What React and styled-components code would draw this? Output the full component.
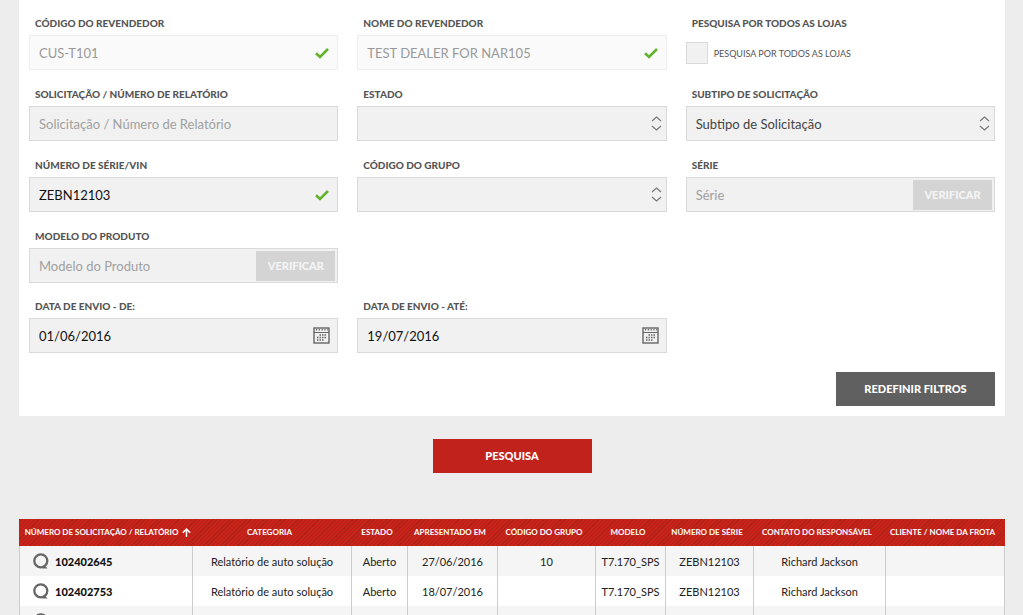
import React from 'react';
import styled, { createGlobalStyle } from 'styled-components';

const GlobalStyle = createGlobalStyle`
  * {
    box-sizing: border-box;
  }
  body {
    margin: 0;
    background: #ededed;
    color: #222;
    font-family: "Gill Sans", Lato, "Open Sans", sans-serif;
  }
  button, input, select {
    font-family: inherit;
  }
`;

const Page = styled.main`
  padding: 0 18px 0 19px;
`;

const Panel = styled.form`
  background: #fff;
  padding: 11px 10px 10px;
`;

const Filters = styled.div`
  display: grid;
  grid-template-columns: repeat(3, 1fr);
  column-gap: 19px;
  row-gap: 11px;
`;

const FieldWrapper = styled.div`
  grid-column-start: ${props => props.$first ? 1 : 'auto'};
`;

const Label = styled.label`
  display: block;
  height: 24px;
  padding: 2px 6px 0;
  line-height: 20px;
  font-size: 10px;
  font-weight: 900;
  color: #555;
  text-transform: uppercase;
  white-space: nowrap;
`;

const Box = styled.div`
  display: flex;
  align-items: center;
  height: 35px;
  border: 1px solid ${props => props.$locked ? '#eee' : '#dadada'};
  background: ${props => props.$locked ? '#fafafa' : '#f1f1f1'};
`;

const TextInput = styled.input`
  flex: 1;
  min-width: 0;
  height: 100%;
  padding: 0 9px;
  border: 0;
  outline: none;
  background: transparent;
  font-size: 13px;
  color: #111;
  &::placeholder {
    color: #a0a0a0;
    opacity: 1;
  }
  &:disabled {
    color: #999;
  }
`;

const CheckIcon = styled.svg`
  width: 14px;
  height: 12px;
  margin-right: 8px;
`;

const VerifyButton = styled.button`
  width: 79px;
  height: 30px;
  margin-right: 2px;
  padding: 0 0 1px;
  border: 0;
  background: #d4d4d4;
  color: #f4f4f4;
  font-size: 11px;
  font-weight: 900;
  text-transform: uppercase;
`;

const CalendarButton = styled.button`
  display: flex;
  margin-right: 7px;
  padding: 0;
  border: 0;
  background: transparent;
  cursor: pointer;
`;

const SelectBox = styled.div`
  position: relative;
  margin-bottom: 1px;
`;

const SelectInput = styled.select`
  display: block;
  width: 100%;
  height: 35px;
  padding: 0 30px 0 9px;
  border: 1px solid #dadada;
  border-radius: 0;
  appearance: none;
  background: #f1f1f1;
  font-size: 13px;
  color: #444;
`;

const SelectArrows = styled.svg`
  position: absolute;
  right: 5px;
  top: 10px;
  width: 11px;
  height: 15px;
  pointer-events: none;
`;

const CheckRow = styled.div`
  display: flex;
  align-items: center;
  gap: 6px;
  height: 36px;
`;

const Checkbox = styled.input.attrs({ type: 'checkbox' })`
  appearance: none;
  width: 22px;
  height: 22px;
  margin: 0;
  border: 1px solid #dadada;
  background: #f1f1f1;
`;

const CheckLabel = styled.label`
  font-size: 9px;
  color: #555;
  text-transform: uppercase;
`;

const Actions = styled.div`
  display: flex;
  justify-content: ${props => props.$align};
  padding-top: ${props => props.$top}px;
`;

const Button = styled.button`
  width: 159px;
  height: 34px;
  padding: 0 0 2px;
  border: 0;
  background: ${props => props.$primary ? '#c2221c' : '#606060'};
  color: #fff;
  font-size: 11px;
  font-weight: 900;
  text-transform: uppercase;
  cursor: pointer;
`;

const Table = styled.table`
  width: 100%;
  margin-top: 46px;
  table-layout: fixed;
  border-collapse: separate;
  border-spacing: 0;
`;

const HeadRow = styled.tr`
  background: repeating-linear-gradient(135deg, #c92219 0 2px, #b02318 2px 3px);
`;

const HeadCell = styled.th`
  width: ${props => props.$width}px;
  height: 27px;
  padding: ${props => props.$sorted ? '0 0 1px 4px' : '0 6px 1px 0'};
  font-size: 8px;
  font-weight: 700;
  color: #fff;
  text-transform: uppercase;
  white-space: nowrap;
  svg {
    width: 9px;
    height: 9px;
    margin-left: 4px;
    vertical-align: -2px;
  }
`;

const Row = styled.tr`
  background: #fff;
  &:nth-child(odd) {
    background: #f5f5f5;
  }
`;

const Cell = styled.td`
  height: 30px;
  padding: 0;
  border-right: 1px solid #ccc;
  font-size: 11px;
  text-align: center;
  white-space: nowrap;
  &:first-child {
    border-left: 1px solid #ccc;
  }
`;

const RequestLink = styled.a`
  display: flex;
  align-items: center;
  gap: 6px;
  padding-left: 13px;
  font-size: 11px;
  font-weight: 900;
  color: #111;
  text-decoration: none;
  svg {
    width: 16px;
    height: 16px;
  }
`;

const Check = () => (
  <CheckIcon viewBox="0 0 14 12" fill="none" stroke="#62b32e" strokeWidth="2.6">
    <path d="M1 6.2 L5 10 L13 2" />
  </CheckIcon>
);

const Calendar = () => (
  <svg width="17" height="17" viewBox="0 0 17 17" fill="none" stroke="#666">
    <rect x="1" y="1" width="15" height="15" strokeWidth="1.4" />
    <path d="M1 5.5 H16" />
    <path d="M3 2.8 H15" strokeWidth="1.6" strokeDasharray="1.2 1.6" />
    <path d="M6.5 8 H14" strokeWidth="1.5" strokeDasharray="1.5 1" />
    <path d="M4 10.5 H14" strokeWidth="1.5" strokeDasharray="1.5 1" />
    <path d="M4 13 H11.5" strokeWidth="1.5" strokeDasharray="1.5 1" />
  </svg>
);

const Ring = () => (
  <svg viewBox="0 0 16 16" fill="none" stroke="#666">
    <circle cx="7.8" cy="7.8" r="6.5" strokeWidth="2.3" />
    <path d="M9.5 15.6 L14.6 15.6 L11.5 12.5" fill="#666" stroke="none" />
  </svg>
);

const SortArrow = () => (
  <svg viewBox="0 0 9 9" fill="none" stroke="#fff" strokeWidth="1.5">
    <path d="M4.5 9 V1.2 M0.8 4.8 L4.5 1.1 L8.2 4.8" />
  </svg>
);

const TextField = ({ id, label, valid, verify, date, first, ...input }) => (
  <FieldWrapper $first={first}>
    <Label htmlFor={id}>{label}</Label>
    <Box $locked={input.disabled}>
      <TextInput id={id} type="text" {...input} />
      {valid && <Check />}
      {verify && <VerifyButton type="button" disabled>Verificar</VerifyButton>}
      {date && (
        <CalendarButton type="button" aria-label="Abrir calendário">
          <Calendar />
        </CalendarButton>
      )}
    </Box>
  </FieldWrapper>
);

const SelectField = ({ id, label, placeholder }) => (
  <FieldWrapper>
    <Label htmlFor={id}>{label}</Label>
    <SelectBox>
      <SelectInput id={id}>
        <option value="">{placeholder}</option>
      </SelectInput>
      <SelectArrows viewBox="0 0 11 15" fill="none" stroke="#777" strokeWidth="1.2">
        <path d="M1 5 L5.5 1 L10 5 M1 10 L5.5 14 L10 10" />
      </SelectArrows>
    </SelectBox>
  </FieldWrapper>
);

const columns = [
  { title: 'Número de Solicitação / Relatório', width: 174, sorted: true },
  { title: 'Categoria', width: 159 },
  { title: 'Estado', width: 56 },
  { title: 'Apresentado em', width: 90 },
  { title: 'Código do Grupo', width: 98 },
  { title: 'Modelo', width: 70 },
  { title: 'Número de Série', width: 88 },
  { title: 'Contato do Responsável', width: 132 },
  { title: 'Cliente / Nome da Frota', width: 119 },
];

const requests = [
  ['102402645', 'Relatório de auto solução', 'Aberto', '27/06/2016', '10', 'T7.170_SPS', 'ZEBN12103', 'Richard Jackson', ''],
  ['102402753', 'Relatório de auto solução', 'Aberto', '18/07/2016', '', 'T7.170_SPS', 'ZEBN12103', 'Richard Jackson', ''],
  ['', '', '', '', '', '', '', '', ''],
];

class App extends React.Component {
  constructor(props) {
    super(props);
    this.state = { serial: 'ZEBN12103', from: '01/06/2016', to: '19/07/2016' };
    this.updateField = this.updateField.bind(this);
  }

  updateField(e) {
    this.setState({ [e.target.name]: e.target.value });
  }

  render() {
    const { serial, from, to } = this.state;
    return (
      <Page>
        <GlobalStyle />
        <Panel id="filters">
          <Filters>
            <TextField id="dealerCode" label="Código do Revendedor" defaultValue="CUS-T101" disabled valid />
            <TextField id="dealerName" label="Nome do Revendedor" defaultValue="TEST DEALER FOR NAR105" disabled valid />
            <FieldWrapper>
              <Label htmlFor="allStores">Pesquisa por todos as lojas</Label>
              <CheckRow>
                <Checkbox id="allStores" />
                <CheckLabel htmlFor="allStores">Pesquisa por todos as lojas</CheckLabel>
              </CheckRow>
            </FieldWrapper>

            <TextField id="request" label="Solicitação / Número de Relatório" placeholder="Solicitação / Número de Relatório" />
            <SelectField id="status" label="Estado" />
            <SelectField id="subtype" label="Subtipo de Solicitação" placeholder="Subtipo de Solicitação" />

            <TextField id="serial" name="serial" label="Número de Série/VIN" value={serial} onChange={this.updateField} valid />
            <SelectField id="group" label="Código do Grupo" />
            <TextField id="series" label="Série" placeholder="Série" verify />

            <TextField id="model" label="Modelo do Produto" placeholder="Modelo do Produto" verify />

            <TextField id="from" name="from" label="Data de envio - de:" value={from} onChange={this.updateField} date first />
            <TextField id="to" name="to" label="Data de envio - até:" value={to} onChange={this.updateField} date />
          </Filters>
          <Actions $align="flex-end" $top={19}>
            <Button type="reset">Redefinir Filtros</Button>
          </Actions>
        </Panel>
        <Actions $align="center" $top={23}>
          <Button type="submit" form="filters" $primary>Pesquisa</Button>
        </Actions>
        <Table>
          <thead>
            <HeadRow>
              {columns.map(col => (
                <HeadCell key={col.title} $width={col.width} $sorted={col.sorted}>
                  {col.title}
                  {col.sorted && <SortArrow />}
                </HeadCell>
              ))}
            </HeadRow>
          </thead>
          <tbody>
            {requests.map(([number, ...cells], i) => (
              <Row key={i}>
                <Cell>
                  <RequestLink href="#">
                    <Ring />
                    {number}
                  </RequestLink>
                </Cell>
                {cells.map((text, j) => <Cell key={j}>{text}</Cell>)}
              </Row>
            ))}
          </tbody>
        </Table>
      </Page>
    );
  }
}

export default App;
